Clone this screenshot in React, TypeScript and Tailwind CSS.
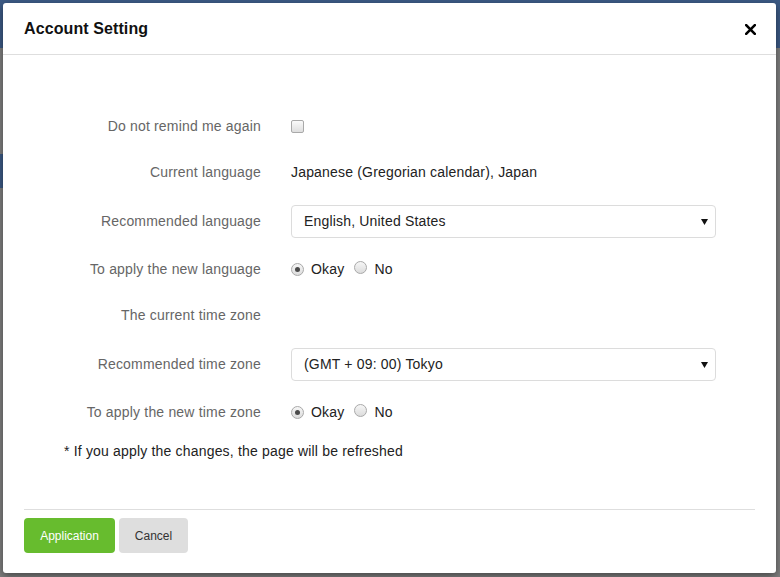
import React from "react";

const font = { fontFamily: '"Liberation Sans", Arial, sans-serif' };

function Radio({ checked }: { checked?: boolean }) {
  return (
    <span className="relative inline-flex h-[13px] w-[13px] items-center justify-center rounded-full border border-[#a9a9a9] bg-gradient-to-b from-[#f6f6f6] to-[#dcdcdc]">
      {checked && <span className="h-[5px] w-[5px] rounded-full bg-[#4a4a4a]" />}
    </span>
  );
}

function Select({ value }: { value: string }) {
  return (
    <div className="flex h-[33px] w-[425px] items-center justify-between rounded-[4px] border border-[#dcdcdc] bg-white pl-[12px] pr-[7px] text-[14px] tracking-[0.18px] text-[#222]">
      <span>{value}</span>
      <svg width="7" height="6" viewBox="0 0 7 6">
        <polygon points="0,0 7,0 3.5,6" fill="#111" />
      </svg>
    </div>
  );
}

function Row({
  label,
  h,
  mt,
  children,
}: {
  label: string;
  h: string;
  mt: string;
  children?: React.ReactNode;
}) {
  return (
    <div className={`flex items-center ${h} ${mt}`}>
      <div className="w-[237px] shrink-0 text-right text-[14px] tracking-[0.18px] text-[#666]">{label}</div>
      <div className="ml-[30px] flex items-center text-[14px] tracking-[0.18px] text-[#222]">{children}</div>
    </div>
  );
}

export default function App() {
  return (
    <div className="relative h-[577px] w-[780px] overflow-hidden bg-[#7f7f7f]" style={font}>
      {/* dimmed page behind */}
      <div className="h-[48px] w-full bg-[#3c5a85]" />
      <div className="mt-[106px] h-[34px] w-[20px] bg-[#3c5a85]" />

      {/* modal */}
      <div className="absolute left-[3px] top-[3px] flex h-[570px] w-[773px] flex-col rounded-[3px] bg-white shadow-[0_3px_8px_rgba(0,0,0,0.45)]">
        <div className="flex h-[52px] shrink-0 items-center justify-between border-b border-[#dedede] pl-[21px] pr-[20px]">
          <span className="text-[16px] font-bold tracking-[0.1px] text-[#111]">Account Setting</span>
          <svg width="11" height="11" viewBox="0 0 11 11" className="mt-[1px]">
            <path d="M1.2 1.2 L9.8 9.8 M9.8 1.2 L1.2 9.8" stroke="#000" strokeWidth="2.6" strokeLinecap="square" />
          </svg>
        </div>

        <div className="flex flex-col pl-[21px]">
          <Row label="Do not remind me again" h="h-[32px]" mt="mt-[55px]">
            <span className="h-[13px] w-[13px] rounded-[2px] border border-[#a9a9a9] bg-gradient-to-b from-[#fafafa] to-[#dedede]" />
          </Row>
          <Row label="Current language" h="h-[32px]" mt="mt-[14px]">
            <span>Japanese (Gregorian calendar), Japan</span>
          </Row>
          <Row label="Recommended language" h="h-[33px]" mt="mt-[17px]">
            <Select value="English, United States" />
          </Row>
          <Row label="To apply the new language" h="h-[32px]" mt="mt-[15px]">
            <Radio checked />
            <span className="ml-[7px]">Okay</span>
            <span className="ml-[10px]">
              <Radio />
            </span>
            <span className="ml-[7px]">No</span>
          </Row>
          <Row label="The current time zone" h="h-[32px]" mt="mt-[14px]" />
          <Row label="Recommended time zone" h="h-[33px]" mt="mt-[17px]">
            <Select value="(GMT + 09: 00) Tokyo" />
          </Row>
          <Row label="To apply the new time zone" h="h-[32px]" mt="mt-[15px]">
            <Radio checked />
            <span className="ml-[7px]">Okay</span>
            <span className="ml-[10px]">
              <Radio />
            </span>
            <span className="ml-[7px]">No</span>
          </Row>
          <div className="ml-[40px] mt-[13px] flex h-[20px] items-center text-[14px] tracking-[0.18px] text-[#222]">
            * If you apply the changes, the page will be refreshed
          </div>
        </div>

        <div className="mx-[21px] mt-[48px] border-t border-[#dedede] pt-[8px]">
          <div className="flex gap-[4px]">
            <button className="h-[35px] w-[91px] rounded-[4px] bg-[#67bc2e] text-[12px] text-white">
              Application
            </button>
            <button className="h-[35px] w-[69px] rounded-[4px] bg-[#dedede] text-[12px] text-[#333]">
              Cancel
            </button>
          </div>
        </div>
      </div>
    </div>
  );
}
